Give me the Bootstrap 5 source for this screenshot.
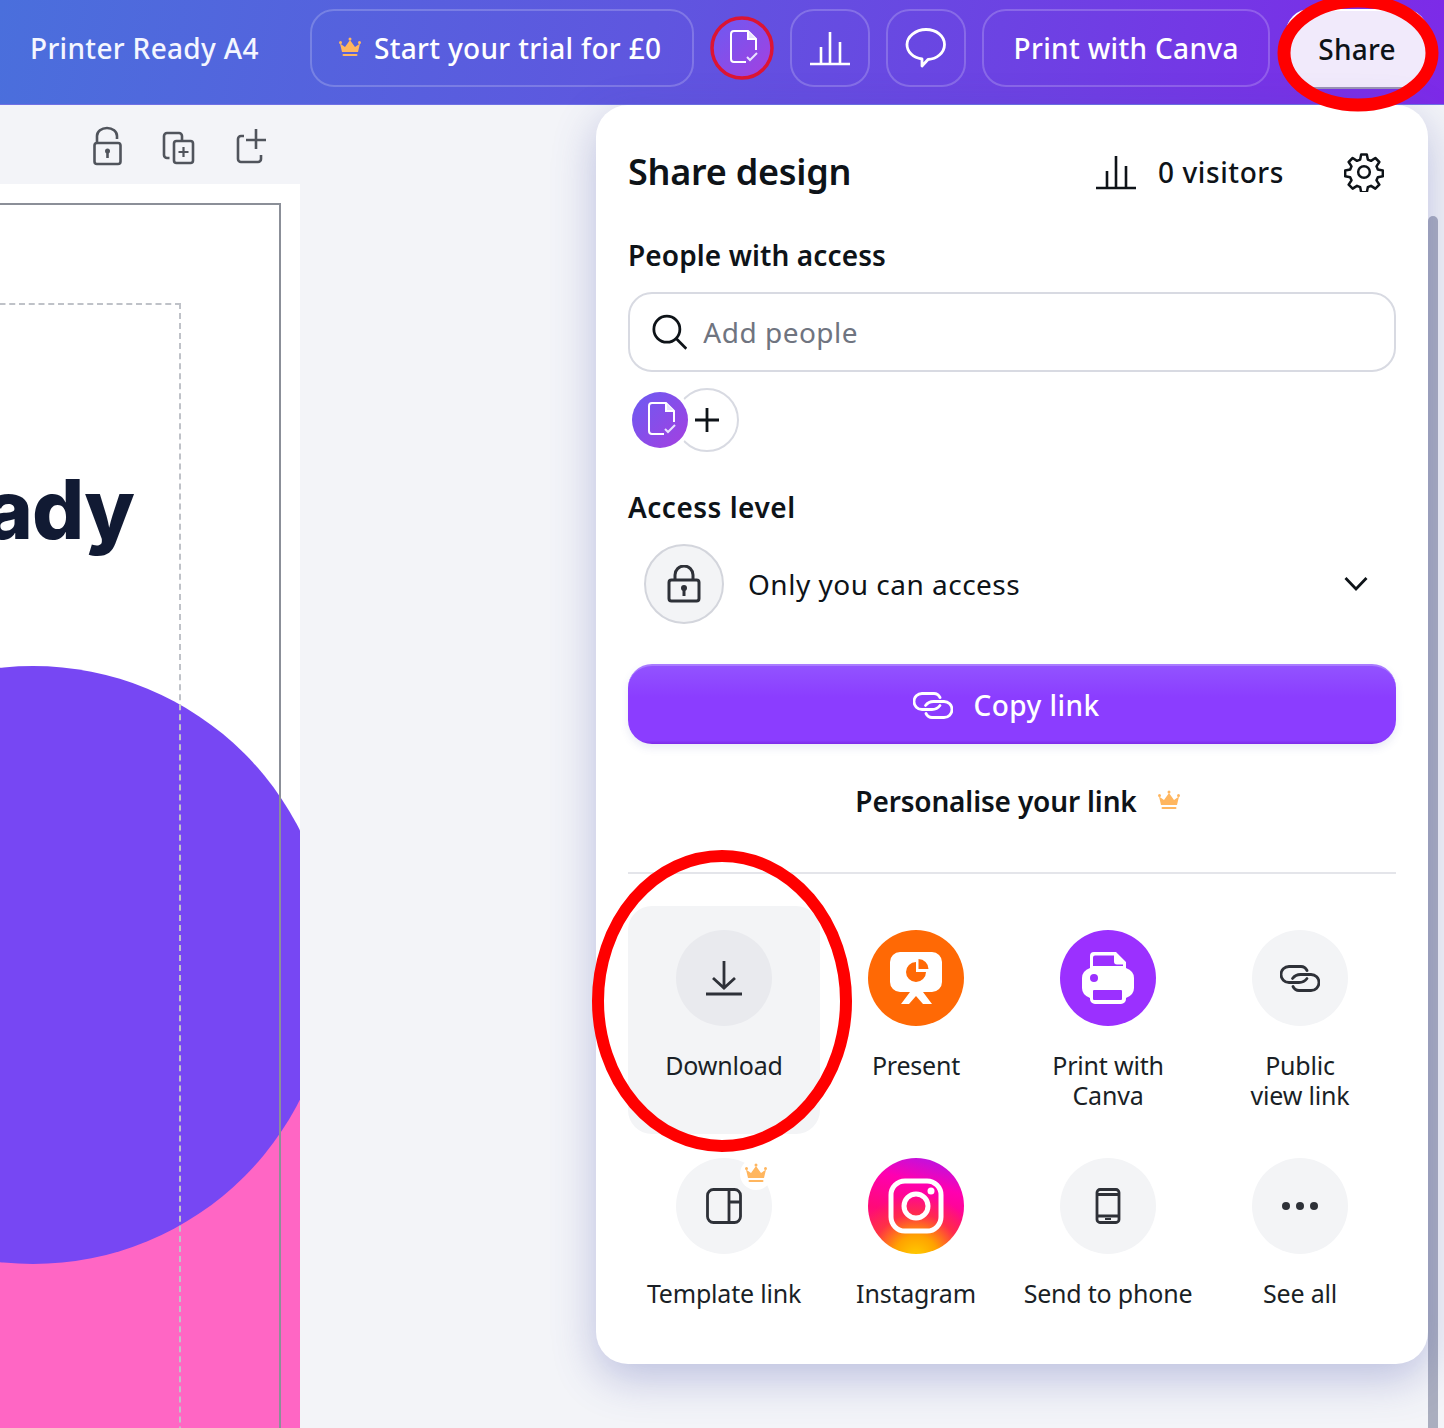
<!DOCTYPE html>
<html>
<head>
    <title>Share design</title>
    <meta name="viewport" content="width=device-width, initial-scale=1">
    <link href="https://cdn.jsdelivr.net/npm/bootstrap@5.3.0/dist/css/bootstrap.min.css" rel="stylesheet">
    <style>
        html, body { height: 100%; }
        body {
            background: #f3f4f8;
            color: #0e1318;
            font-family: "Noto Sans", "Liberation Sans", sans-serif;
            overflow: hidden;
        }
        .app-stage { position: relative; width: 1444px; height: 1428px; overflow: hidden; }

        /* header */
        .top-bar {
            height: 105px;
            padding: 9px 16px 18px 30px;
            background: linear-gradient(100deg, #4a6fdc 0%, #5f56df 45%, #7d2ae8 100%);
            border-bottom: 1px solid #6f71e4;
        }
        .doc-title { color: #f4f6ff; font-size: 28px; font-weight: 500; width: 280px; letter-spacing: .33px; }
        .bar-btn {
            height: 78px;
            border: 2px solid rgba(255,255,255,.2);
            border-radius: 24px;
            color: #fff;
            font-size: 28px;
            font-weight: 500;
            letter-spacing: .33px;
            background: transparent;
            padding: 0;
        }
        .bar-btn:hover { color: #fff; border-color: rgba(255,255,255,.2); }
        .trial-btn { width: 384px; gap: 12px; padding-right: 4px; }
        .icon-btn { width: 80px; }
        .print-btn { width: 288px; }
        .share-btn {
            width: 142px;
            height: 78px;
            padding: 0;
            border: 0;
            border-top: 2px solid #fff;
            border-radius: 24px;
            background: #f1eafb;
            box-shadow: 0 2px 0 #9a93b4;
            color: #0e1318;
            font-size: 28px;
            font-weight: 500;
            letter-spacing: .2px;
        }
        .doc-dot {
            width: 56px; height: 56px;
            border-radius: 50%;
            background: linear-gradient(135deg, #6b5bf2, #a53fe0);
            flex: none;
        }
        .bar-doc { margin: 0 8px 0 9px; width: 80px; }
        .bar-doc .doc-dot { width: 60px; height: 60px; }

        /* canvas */
        .tool-row { position: absolute; left: 86px; top: 122px; gap: 30px; }
        .design-page { position: absolute; left: -20px; top: 184px; width: 320px; height: 1244px; background: #fff; overflow: hidden; }
        .bleed-line { position: absolute; left: 0; top: 19px; width: 301px; height: 1300px; border: 2px solid #8b8f98; }
        .safe-line { position: absolute; left: 0; top: 119px; width: 201px; height: 1300px; border: 2px dashed #bfc2c8; }
        .page-word { position: absolute; right: 166px; top: 285px; font-family: "Inter", sans-serif; font-weight: 800; font-size: 82px; line-height: 1; color: #111a33; letter-spacing: -1px; }
        .pink-block { position: absolute; left: 0; right: 0; top: 780px; bottom: 0; background: #ff66c4; }
        .purple-disc { position: absolute; left: -246px; top: 482px; width: 598px; height: 598px; border-radius: 50%; background: #7747f3; }

        .scroll-thumb { position: absolute; left: 1428px; top: 216px; width: 10px; height: 1212px; border-radius: 5px 5px 0 0; background: #aaaebf; }

        /* share panel */
        .share-panel {
            position: absolute;
            left: 596px; top: 105px;
            width: 832px; height: 1259px;
            padding: 0 32px;
            background: #fff;
            border-radius: 32px;
            box-shadow: 0 14px 44px rgba(70,80,170,.32);
        }
        .panel-head { height: 134px; padding-right: 12px; }
        .panel-title { font-size: 36px; font-weight: 600; margin: 0; letter-spacing: -.25px; }
        .visitor-count { font-size: 28px; font-weight: 500; letter-spacing: .6px; margin-right: 60px; gap: 21px; }
        .sub-title { font-size: 28px; font-weight: 600; line-height: 32px; margin: 0; letter-spacing: .1px; }
        .people-field { height: 80px; margin-top: 21px; padding: 0 22px; border: 2px solid #d8dae2; border-radius: 24px; }
        .people-field .form-control { border: 0; padding: 0; box-shadow: none; font-size: 28px; letter-spacing: .5px; color: #0e1318; background: transparent; }
        .people-field .form-control::placeholder { color: #6f7480; opacity: 1; }
        .avatar-row { height: 64px; margin-top: 16px; }
        .avatar-halo { z-index: 1; box-shadow: 0 0 0 4px #fff; }
        .plus-ring { width: 64px; height: 64px; border: 2px solid #d8dae2; border-radius: 50%; margin-left: -13px; }
        .access-title { margin-top: 39px; letter-spacing: .5px; }
        .access-row { height: 80px; margin-top: 21px; padding: 0 28px 0 16px; font-size: 28px; letter-spacing: .5px; }
        .lock-ring { width: 80px; height: 80px; border: 2px solid #d3d5dc; border-radius: 50%; background: #f3f4f6; }
        .copy-btn {
            display: flex; align-items: center; justify-content: center; gap: 20px;
            width: 100%; height: 80px; margin-top: 40px; padding: 0 11px 0 0;
            border: 0; border-top: 2px solid #a97bff; border-radius: 24px;
            background: linear-gradient(#9253ff, #8b3dff 40%, #8b3dff 95%, #7d2ae8);
            box-shadow: 0 4px 8px rgba(70,80,170,.12);
            color: #fff; font-size: 28px; font-weight: 500; letter-spacing: .45px;
        }
        .copy-btn:hover { color: #fff; }
        .custom-link { height: 40px; margin-top: 37px; padding-left: 12px; font-size: 28px; font-weight: 600; letter-spacing: -.15px; gap: 20px; }
        .panel-rule { margin: 51px 0 32px; border-top: 2px solid #e4e5ea; opacity: 1; }
        .share-grid { display: grid; grid-template-columns: repeat(4, 192px); grid-auto-rows: 228px; }
        .share-cell { padding-top: 24px; border-radius: 24px; text-align: center; font-size: 25px; letter-spacing: -.2px; line-height: 30px; color: #1a1f26; }
        .share-cell.is-hover { background: #f3f4f6; }
        .cell-disc { position: relative; width: 96px; height: 96px; margin: 0 auto 24px; border-radius: 50%; background: #f3f4f6; color: #2e3138; }
        .is-hover .cell-disc { background: #e9eaee; }
        .disc-orange { background: #ff6905; }
        .disc-purple { background: #9b30ff; }
        .disc-insta {
            background:
                radial-gradient(circle at 50% 104%, #ffd000 0%, #ffa200 20%, rgba(255,70,40,.55) 40%, rgba(255,0,120,0) 58%),
                linear-gradient(195deg, #a818f0 0%, #ff00b0 30%, #ff0a78 60%, #ff2f50 100%);
        }
        .crown-chip {
            position: absolute; right: 0; top: 0;
            width: 32px; height: 32px;
            border-radius: 50%;
            background: #fff;
        }
        .annotate { position: absolute; left: 0; top: 0; pointer-events: none; }
        .icon-defs { position: absolute; width: 0; height: 0; }
    </style>
</head>
<body>
<svg class="icon-defs" aria-hidden="true">
    <symbol id="ic-crown" viewBox="0 0 24 24"><path fill="#ffb65f" d="M4 16 2 7.500l5 3.500 5-7 5 7 5-3.500L20 16z"/><circle fill="#ffb65f" cx="2.500" cy="6.500" r="1.500"/><circle fill="#ffb65f" cx="21.500" cy="6.500" r="1.500"/><circle fill="#ffb65f" cx="12" cy="3" r="1.500"/><rect fill="#ffb65f" x="4.500" y="18" width="15" height="2" rx="1"/></symbol>
    <symbol id="ic-link" viewBox="0 0 40 27"><g fill="none" stroke="currentColor" stroke-width="2.800" stroke-linecap="round"><path d="M27 5.500Q25 1.500 21 1.500H9a8 8 0 0 0 0 16h4"/><path d="M13 21.500q2 4 6 4h12a8 8 0 0 0 0-16h-4"/><path d="M12.500 13.500q3-4 8-4H27"/><path d="M13 17.500h6q5 0 8-4"/></g></symbol>
    <symbol id="ic-doc" viewBox="0 0 36 36"><g fill="none" stroke="#fff" stroke-width="2"><path d="M22 32H10a3 3 0 0 1-3-3V4a3 3 0 0 1 3-3h14l8 8v11"/><path d="M24 1v8h8" fill="#e9e2ff"/><path d="m23 27 3 3 7-7" stroke="#e9e2ff"/></g></symbol>
    <symbol id="ic-bars" viewBox="0 0 42 40"><path fill="none" stroke="currentColor" stroke-width="2.600" d="M1 36h40M12 36V19M21 36V4M31 36V14"/></symbol>
</svg>

<div class="app-stage">

    <!-- canvas behind the panel -->
    <div class="design-page">
        <div class="pink-block"></div>
        <div class="purple-disc"></div>
        <div class="bleed-line"></div>
        <div class="safe-line"></div>
        <div class="page-word">Ready</div>
    </div>

    <div class="tool-row d-flex">
        <svg width="42" height="48" viewBox="0 0 42 48" fill="none" stroke="#50545c" stroke-width="2.6"><path d="M11 21v-7a10 8 0 0 1 20 0v3"/><rect x="8.500" y="21" width="26" height="21" rx="2.500"/><circle cx="21.500" cy="29" r="2.500" fill="#50545c" stroke="none"/><path d="M21.500 30v6"/></svg>
        <svg width="42" height="48" viewBox="0 0 42 48" fill="none" stroke="#50545c" stroke-width="2.6"><path d="M11.500 36H9a3 3 0 0 1-3-3V14a3 3 0 0 1 3-3h12a3 3 0 0 1 3 3v4"/><rect x="16" y="19" width="19" height="22" rx="2.500"/><path d="M25.500 25v10M20.500 30h10" stroke-width="2.200"/></svg>
        <svg width="42" height="48" viewBox="0 0 42 48" fill="none" stroke="#50545c" stroke-width="2.6"><path d="M14 14h-3a3 3 0 0 0-3 3v20a3 3 0 0 0 3 3h17a3 3 0 0 0 3-3v-4"/><path d="M26 7v20M16 18h20"/></svg>
    </div>

    <div class="scroll-thumb"></div>

    <!-- top bar -->
    <div class="top-bar d-flex align-items-center position-relative">
        <div class="doc-title">Printer Ready A4</div>
        <button class="btn bar-btn trial-btn d-flex align-items-center justify-content-center" type="button">
            <svg width="24" height="24"><use href="#ic-crown"/></svg>
            Start your trial for £0
        </button>
        <div class="bar-doc d-flex justify-content-center">
            <div class="doc-dot d-flex align-items-center justify-content-center">
                <svg width="36" height="36"><use href="#ic-doc"/></svg>
            </div>
        </div>
        <button class="btn bar-btn icon-btn d-flex align-items-center justify-content-center" type="button">
            <svg width="42" height="40" class="text-white"><use href="#ic-bars"/></svg>
        </button>
        <button class="btn bar-btn icon-btn d-flex align-items-center justify-content-center ms-3" type="button">
            <svg width="42" height="42" viewBox="0 0 42 42" fill="none" stroke="#fff" stroke-width="2.800" stroke-linejoin="round"><path d="M21 2.500c10.500 0 18.500 6.500 18.500 15S31.500 32 23 32.500l-6 6.500v-7C8 30.500 2 25 2 17.500S10.500 2.500 21 2.500z"/></svg>
        </button>
        <button class="btn bar-btn print-btn ms-3" type="button">Print with Canva</button>
        <button class="btn share-btn ms-3" type="button">Share</button>
    </div>

    <!-- share popover -->
    <div class="share-panel">
        <div class="panel-head d-flex align-items-center justify-content-between">
            <h2 class="panel-title">Share design</h2>
            <div class="d-flex align-items-center">
                <div class="visitor-count d-flex align-items-center">
                    <svg width="42" height="40"><use href="#ic-bars"/></svg>
                    0 visitors
                </div>
                <svg width="40" height="40" viewBox="0 0 24 24" fill="none" stroke="#0e1318" stroke-width="1.500" stroke-linejoin="round"><circle cx="12" cy="12" r="3.500"/><path d="M10.300 1.500h3.400l.6 3 1.900.8 2.600-1.700 2.400 2.400-1.700 2.600.8 1.900 3 .6v3.400l-3 .6-.8 1.900 1.700 2.600-2.400 2.400-2.600-1.700-1.900.8-.6 3h-3.400l-.6-3-1.900-.8-2.600 1.700-2.400-2.400 1.700-2.600-.8-1.900-3-.6v-3.400l3-.6.8-1.900-1.700-2.600 2.400-2.400 2.600 1.700 1.900-.8z"/></svg>
            </div>
        </div>

        <h3 class="sub-title">People with access</h3>
        <div class="people-field d-flex align-items-center gap-3">
            <svg width="38" height="38" viewBox="0 0 38 38" fill="none" stroke="#0e1318" stroke-width="3"><circle cx="16" cy="16" r="14"/><path d="m26 26 11 11"/></svg>
            <input class="form-control" type="text" placeholder="Add people" aria-label="Add people">
        </div>
        <div class="avatar-row d-flex align-items-center ps-1">
            <div class="doc-dot avatar-halo position-relative d-flex align-items-center justify-content-center">
                <svg width="36" height="36"><use href="#ic-doc"/></svg>
            </div>
            <div class="plus-ring d-flex align-items-center justify-content-center">
                <svg width="26" height="26" viewBox="0 0 26 26" stroke="#0e1318" stroke-width="2.800"><path d="M13 1v24M1 13h24"/></svg>
            </div>
        </div>

        <h3 class="sub-title access-title">Access level</h3>
        <div class="access-row d-flex align-items-center">
            <div class="lock-ring d-flex align-items-center justify-content-center me-4">
                <svg width="34" height="38" viewBox="0 0 34 38" fill="none" stroke="#2e3138" stroke-width="3"><path d="M8 16V10a9 9 0 0 1 18 0v6"/><rect x="2" y="15" width="30" height="21" rx="2.500"/><circle cx="17" cy="23" r="3" fill="#2e3138" stroke="none"/><path d="M17 24v7"/></svg>
            </div>
            <span class="flex-grow-1">Only you can access</span>
            <svg width="24" height="16" viewBox="0 0 24 16" fill="none" stroke="#0e1318" stroke-width="2.800"><path d="m1.500 2 10.500 11L22.500 2"/></svg>
        </div>

        <button class="btn copy-btn" type="button">
            <svg width="40" height="27" class="text-white"><use href="#ic-link"/></svg>
            Copy link
        </button>

        <div class="custom-link d-flex align-items-center justify-content-center">
            Personalise your link
            <svg width="24" height="24"><use href="#ic-crown"/></svg>
        </div>

        <hr class="panel-rule">

        <div class="share-grid">
            <div class="share-cell is-hover">
                <div class="cell-disc d-flex align-items-center justify-content-center">
                    <svg width="38" height="36" viewBox="0 0 38 36" fill="none" stroke="#2e3138" stroke-width="2.800"><path d="M19 1v27M8 18l11 10 11-10M1 34h36"/></svg>
                </div>
                Download
            </div>
            <div class="share-cell">
                <div class="cell-disc disc-orange d-flex align-items-center justify-content-center">
                    <svg width="52" height="52" viewBox="0 0 52 52"><path d="M10 0h32a10 10 0 0 1 10 10v20a10 10 0 0 1-10 10h-9l9 12h-9l-7-8-7 8H11l9-12h-10A10 10 0 0 1 0 30V10A10 10 0 0 1 10 0z" fill="#fff"/><path d="M26 10v10h10a10 10 0 1 1-10-10z" fill="#ff6905"/><path d="M28.500 7a10 10 0 0 1 10 10h-10z" fill="#ff6905"/></svg>
                </div>
                Present
            </div>
            <div class="share-cell">
                <div class="cell-disc disc-purple d-flex align-items-center justify-content-center">
                    <svg width="52" height="52" viewBox="0 0 52 52"><path d="M12 0h22l10 10v6q8 3 8 10v10q0 7-8 10v1a5 5 0 0 1-5 5H13a5 5 0 0 1-5-5v-1Q0 43 0 36V26q0-7 8-10V4a4 4 0 0 1 4-4z" fill="#fff"/><path d="M13 3.500h19v6a3 3 0 0 0 3 3h6V14H11V5.500a2 2 0 0 1 2-2z" fill="#9b30ff"/><rect x="11" y="38" width="29" height="10" rx="1" fill="#9b30ff"/><circle cx="12" cy="26" r="4" fill="#9b30ff"/></svg>
                </div>
                Print with<br>Canva
            </div>
            <div class="share-cell">
                <div class="cell-disc d-flex align-items-center justify-content-center">
                    <svg width="40" height="27"><use href="#ic-link"/></svg>
                </div>
                Public<br>view link
            </div>

            <div class="share-cell">
                <div class="cell-disc d-flex align-items-center justify-content-center">
                    <svg width="36" height="36" viewBox="0 0 36 36" fill="none" stroke="#2e3138" stroke-width="2.800"><rect x="1.500" y="1.500" width="33" height="33" rx="6"/><path d="M23 1.500v33M23 14h11.500"/></svg>
                    <span class="crown-chip d-flex align-items-center justify-content-center">
                        <svg width="24" height="24"><use href="#ic-crown"/></svg>
                    </span>
                </div>
                Template link
            </div>
            <div class="share-cell">
                <div class="cell-disc disc-insta d-flex align-items-center justify-content-center">
                    <svg width="56" height="56" viewBox="0 0 56 56" fill="none" stroke="#fff" stroke-width="5"><rect x="3" y="3" width="50" height="50" rx="14"/><circle cx="28" cy="28" r="12"/><circle cx="43" cy="13" r="3.500" fill="#fff" stroke="none"/></svg>
                </div>
                Instagram
            </div>
            <div class="share-cell">
                <div class="cell-disc d-flex align-items-center justify-content-center">
                    <svg width="26" height="36" viewBox="0 0 26 36" fill="none" stroke="#2e3138" stroke-width="2.800"><rect x="2" y="1.500" width="22" height="33" rx="3"/><path d="M2 6.500h22M2 28h22"/><path d="M10 31h6" stroke-width="2"/></svg>
                </div>
                Send to phone
            </div>
            <div class="share-cell">
                <div class="cell-disc d-flex align-items-center justify-content-center">
                    <svg width="38" height="10" viewBox="0 0 38 10" fill="#2e3138"><circle cx="5" cy="5" r="4"/><circle cx="19" cy="5" r="4"/><circle cx="33" cy="5" r="4"/></svg>
                </div>
                See all
            </div>
        </div>
    </div>

    <!-- red hand annotations -->
    <svg class="annotate" width="1444" height="1428" fill="none">
        <circle cx="742" cy="48" r="30" stroke="#dc1433" stroke-width="3.500"/>
        <ellipse cx="1358" cy="53" rx="74" ry="52" stroke="#ff0000" stroke-width="13"/>
        <ellipse cx="722" cy="1001" rx="124" ry="145" stroke="#ff0000" stroke-width="12"/>
    </svg>
</div>

<script src="https://cdn.jsdelivr.net/npm/bootstrap@5.3.0/dist/js/bootstrap.bundle.min.js"></script>
</body>
</html>
